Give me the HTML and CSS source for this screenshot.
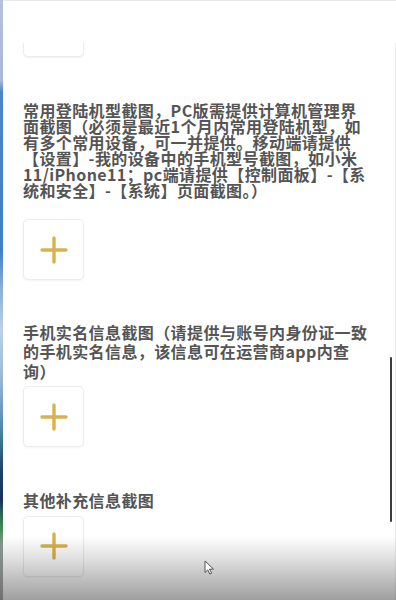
FILE: index.html
```html
<!DOCTYPE html>
<html lang="zh-CN">
<head>
<meta charset="utf-8">
<title>上传截图</title>
<link rel="stylesheet" href="styles.css">
</head>
<body>
<div class="screen">
  <div class="strip"></div>
  <main class="page">
    <div class="upload first">
      <svg class="plus" viewBox="0 0 28 28" width="28" height="28"><path d="M14 2v24M2 14h24"/></svg>
    </div>

    <section class="field s1">
      <h2 class="title">常用登陆机型截图，PC版需提供计算机管理界面截图（必须是最近1个月内常用登陆机型，如有多个常用设备，可一并提供。移动端请提供【设置】-我的设备中的手机型号截图，如小米11/iPhone11；pc端请提供【控制面板】-【系统和安全】-【系统】页面截图。）</h2>
      <div class="upload">
        <svg class="plus" viewBox="0 0 28 28" width="28" height="28"><path d="M14 2v24M2 14h24"/></svg>
      </div>
    </section>

    <section class="field s2">
      <h2 class="title">手机实名信息截图（请提供与账号内身份证一致的手机实名信息，该信息可在运营商app内查询）</h2>
      <div class="upload">
        <svg class="plus" viewBox="0 0 28 28" width="28" height="28"><path d="M14 2v24M2 14h24"/></svg>
      </div>
    </section>

    <section class="field s3">
      <h2 class="title">其他补充信息截图</h2>
      <div class="upload">
        <svg class="plus" viewBox="0 0 28 28" width="28" height="28"><path d="M14 2v24M2 14h24"/></svg>
      </div>
    </section>
  </main>

  <div class="topbar"></div>
  <div class="scrollbar"></div>
  <div class="shade"></div>
  <svg class="cursor" viewBox="0 0 10 15" width="10" height="15"><path d="M1 1v11.5l2.8-2.6 2 4.2 1.8-.9-2-4.1h3.9z"/></svg>
</div>
</body>
</html>
```

FILE: styles.css
```css
html, body {
  margin: 0;
  padding: 0;
  background: #ffffff;
}

body {
  width: 396px;
  height: 600px;
  overflow: hidden;
  font-family: "Noto Sans CJK SC", "Noto Sans", sans-serif;
}

.screen {
  position: relative;
  display: flex;
  height: 600px;
  overflow: hidden;
}

.strip {
  flex: none;
  width: 3px;
  background: linear-gradient(to bottom,
    #b5c1dc 0px, #aab8d8 80px,
    #4b87c6 92px, #3f7fc2 250px,
    #8fb0d8 290px, #bdd0e6 330px,
    #9ab6d6 380px, #5d8fb8 420px,
    #3a7a8e 440px, #22406e 470px,
    #1c2f5c 500px, #2f6b4c 515px,
    #3d8a52 528px, #8d9a92 545px, #b4b4b4 600px);
}

.page {
  flex: 1;
  padding: 0 25px 0 20px;
  border-right: 1px solid #ececec;
}

.upload {
  box-sizing: border-box;
  width: 61px;
  height: 61px;
  border: 1px solid #ececec;
  border-radius: 5px;
  background: #ffffff;
  box-shadow: 0 1px 2px rgba(0, 0, 0, 0.05);
  display: flex;
  align-items: center;
  justify-content: center;
}

.upload.first {
  margin-top: -4px;
}

.plus path {
  fill: none;
  stroke: #d8b24c;
  stroke-width: 3.4;
  stroke-linecap: round;
}

.title {
  margin: 0;
  font-size: 16px;
  letter-spacing: 0.4px;
  font-weight: 600;
  color: #555555;
}

.s1 .title {
  margin-top: 45px;
  margin-bottom: 21px;
  line-height: 16px;
}

.s2 .title {
  margin-top: 43px;
  margin-bottom: 5px;
  line-height: 19.4px;
}

.s3 .title {
  margin-top: 44px;
  margin-bottom: 5px;
  line-height: 19.4px;
}

.topbar {
  position: absolute;
  left: 3px;
  right: 0;
  top: 0;
  height: 42px;
  background: #ffffff;
  border-top: 1px solid #e9e9e9;
}

.scrollbar {
  position: absolute;
  left: 390px;
  top: 357px;
  width: 2px;
  height: 165px;
  background: #3c3c3c;
  border-radius: 1px;
}

.shade {
  position: absolute;
  left: 0;
  right: 0;
  bottom: 0;
  height: 64px;
  background: linear-gradient(to bottom, rgba(0, 0, 0, 0) 0%, rgba(0, 0, 0, 0.12) 35%, rgba(0, 0, 0, 0.38) 100%);
}

.cursor {
  position: absolute;
  left: 204px;
  top: 560px;
}

.cursor path {
  fill: #ffffff;
  stroke: #555555;
  stroke-width: 1;
  stroke-linejoin: round;
}
```
